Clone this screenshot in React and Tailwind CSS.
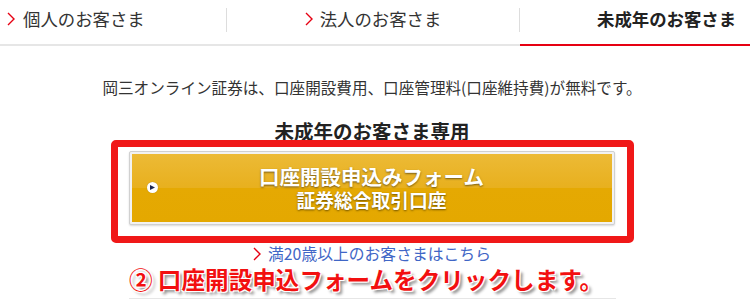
const jp = "font-['Noto_Sans_CJK_JP','Noto_Sans',sans-serif]";

function Chevron({ className = '' }) {
  return (
    <svg viewBox="0 0 8 14" className={`w-[8px] h-[14px] ${className}`} fill="none">
      <path d="M1 1l6 6-6 6" stroke="#e60012" strokeWidth="1.4" />
    </svg>
  );
}

function Tabs() {
  return (
    <div className="flex h-[46px] w-full text-[17.4px] leading-none">
      <div className="w-[226px] flex items-center gap-[8px] pl-[7px] pb-[6px] border-b-2 border-[#e6e6e6] text-[#333]">
        <Chevron />
        <span>個人のお客さま</span>
      </div>
      <div className="w-[294px] flex items-center justify-center gap-[7px] pb-[6px] border-b-2 border-[#e6e6e6] text-[#333] relative">
        <span className="absolute left-0 top-[8px] h-[24px] w-px bg-[#dddddd]" />
        <Chevron />
        <span>法人のお客さま</span>
        <span className="absolute right-0 top-[8px] h-[24px] w-px bg-[#dddddd]" />
      </div>
      <div className="flex-1 flex items-center pl-[77px] pb-[6px] border-b-2 border-[#e60012] font-bold text-[#222]">
        <span>未成年のお客さま</span>
      </div>
    </div>
  );
}

export default function App() {
  return (
    <div className={`w-[750px] h-[301px] bg-white overflow-hidden ${jp}`}>
      <Tabs />
      <main className="flex flex-col items-center pr-[6px]">
        <p className="mt-[31px] text-[15.6px] leading-[20px] text-[#333]">
          岡三オンライン証券は、口座開設費用、口座管理料(口座維持費)が無料です。
        </p>
        <h2 className="mt-[25px] text-[19.5px] leading-[18px] font-bold text-[#222]">
          未成年のお客さま専用
        </h2>
        <div className="w-[523px] h-[103px] border-[7px] border-[#f01818] rounded-[5px] pl-[11px] pr-[12px] pt-[4px]">
          <button className="relative w-full h-[74px] p-[2px] rounded-[2px] border border-[#d0d0d0] bg-[#f2f2f2] shadow-[0_1px_2px_rgba(0,0,0,0.15)]">
            <div className="w-full h-full bg-[linear-gradient(#ecba36,#e8b01e_50%,#e5a903_50%,#e4a800)] flex flex-col items-center justify-center text-white font-bold [text-shadow:0_1px_2px_rgba(0,0,0,0.5)]">
              <span className="text-[20.5px] leading-[24px]">口座開設申込みフォーム</span>
              <span className="text-[18.8px] leading-[24px]">証券総合取引口座</span>
            </div>
            <span className="absolute left-[17px] top-[30px] w-[11px] h-[11px] rounded-full bg-white flex items-center justify-center shadow-[0_0_1px_rgba(0,0,0,0.3)]">
              <svg viewBox="0 0 6 6" className="w-[5px] h-[5px] ml-[1px]">
                <path d="M0 0l6 3-6 3z" fill="#1c2550" />
              </svg>
            </span>
          </button>
        </div>
        <a className="mt-[1px] flex items-center gap-[7px] text-[15.8px] leading-[20px] text-[#3f66c6]">
          <Chevron className="w-[7px] h-[12px]" />
          満20歳以上のお客さまはこちら
        </a>
        <p className="mt-[2px] mr-[12px] text-[23.6px] leading-[27px] font-bold text-[#f21010] [text-shadow:1px_1px_0_#fff,-1px_-1px_0_#fff,1px_-1px_0_#fff,-1px_1px_0_#fff,3px_3px_3px_rgba(0,0,0,0.45)]">
          ② 口座開設申込フォームをクリックします。
        </p>
        <div className="mt-[5px] w-[487px] h-px bg-[#e6e6e6]" />
      </main>
    </div>
  );
}
